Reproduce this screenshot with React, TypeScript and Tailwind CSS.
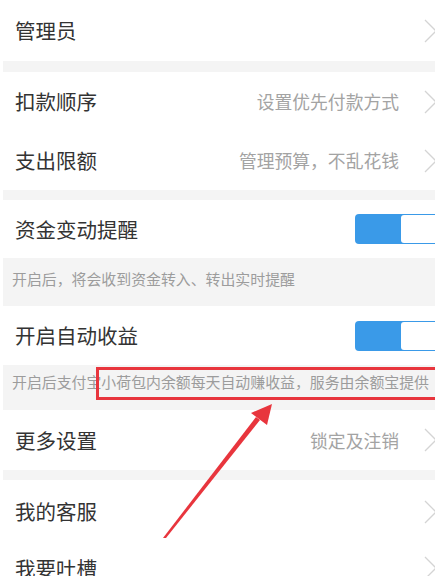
import React from 'react';

const font = { fontFamily: '"Noto Sans CJK SC", "Noto Sans", sans-serif' };

const Chevron = () => (
  <svg width="14" height="24" viewBox="0 0 14 24" className="shrink-0 -mr-[2px]">
    <path d="M2 1 L13 12 L2 23" fill="none" stroke="#d4d4d4" strokeWidth="1.3" />
  </svg>
);

const Toggle = () => (
  <div className="flex h-[30px] w-[90px] shrink-0 -mr-[10px] rounded-[4px] bg-[#3a9ae8] p-[1px]">
    <div className="w-[45px]" />
    <div className="flex-1 rounded-[3px] bg-white" />
  </div>
);

const Row = ({ title, hint, h = 'h-[59px]', toggle = false }: { title: string; hint?: string; h?: string; toggle?: boolean }) => (
  <div className={`flex items-center ${h} bg-white pl-[15px]`}>
    <span className="flex-1 text-[20.5px] text-[#333]">{title}</span>
    {hint && <span className="mr-[24px] text-[17.8px] text-[#a3a3a3]">{hint}</span>}
    {toggle ? <Toggle /> : <Chevron />}
  </div>
);

const Gap = ({ h = 'h-[11px]' }: { h?: string }) => <div className={`${h} ml-[3px] bg-[#f4f4f4]`} />;

const Note = ({ text, h, pt }: { text: string; h: string; pt: string }) => (
  <div className={`${h} ${pt} ml-[3px] bg-[#f4f4f4] pl-[9px] text-[14.9px] leading-[20px] text-[#9c9c9c] whitespace-nowrap`}>
    {text}
  </div>
);

export default function App() {
  return (
    <div className="relative h-[576px] w-[435px] overflow-hidden bg-white" style={font}>
      <Row title="管理员" h="h-[61px]" />
      <Gap />
      <Row title="扣款顺序" hint="设置优先付款方式" />
      <Row title="支出限额" hint="管理预算，不乱花钱" />
      <Gap h="h-[10px]" />
      <Row title="资金变动提醒" h="h-[58px]" toggle />
      <Note text="开启后，将会收到资金转入、转出实时提醒" h="h-[48px]" pt="pt-[11px]" />
      <Row title="开启自动收益" toggle />
      <Note text="开启后支付宝小荷包内余额每天自动赚收益，服务由余额宝提供" h="h-[45px]" pt="pt-[7px]" />
      <Row title="更多设置" hint="锁定及注销" h="h-[60px]" />
      <Gap h="h-[10px]" />
      <Row title="我的客服" h="h-[63px]" />
      <Row title="我要吐槽" h="h-[50px]" />

      <div className="absolute left-[96px] top-[367px] h-[33px] w-[345px] border-[3px] border-[#e8353d]" />
      <svg className="absolute left-0 top-0" width="435" height="576" viewBox="0 0 435 576">
        <path d="M163 538 L256 417 L260 420 L166 538 Z" fill="#e8353d" />
        <path d="M272 404 L251 413 L267 425 Z" fill="#e8353d" />
      </svg>
    </div>
  );
}
